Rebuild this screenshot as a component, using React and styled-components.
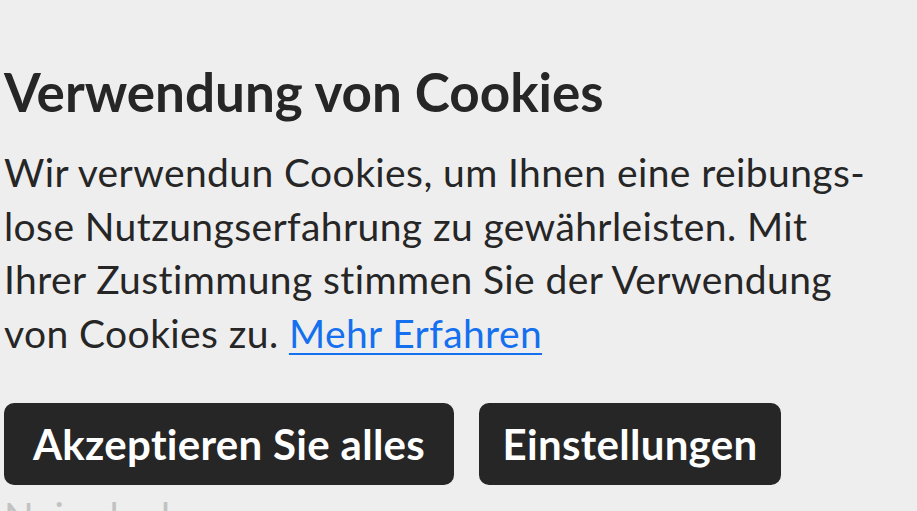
import React from 'react';
import styled, { createGlobalStyle } from 'styled-components';

const GlobalStyle = createGlobalStyle`
  html, body {
    margin: 0;
    padding: 0;
    background: #eeeeee;
    overflow: hidden;
  }
  body {
    font-family: Lato, "Noto Sans", sans-serif;
    color: #262626;
  }
`;

const Banner = styled.section`
  width: 917px;
  height: 511px;
  box-sizing: border-box;
  padding: 62px 0 0 4px;
  overflow: hidden;
`;

const Title = styled.h1`
  margin: 0 0 24px;
  font-size: 53px;
  line-height: 60px;
  font-weight: 700;
`;

const Text = styled.p`
  margin: 0;
  font-size: 39px;
  line-height: 53.7px;
  font-weight: 400;
  letter-spacing: 0.4px;
  white-space: nowrap;
`;

const MoreLink = styled.a`
  color: #1570ef;
  text-decoration: underline;
  text-decoration-thickness: 2px;
  text-underline-offset: 5px;
`;

const Actions = styled.div`
  display: flex;
  gap: 25px;
  margin-top: 42px;
`;

const Button = styled.button`
  width: ${(props) => props.$width}px;
  height: 82px;
  padding: 0;
  border: 0;
  border-radius: 10px;
  background: #262626;
  color: #ffffff;
  font-family: Lato, "Noto Sans", sans-serif;
  font-size: 42px;
  font-weight: 700;
  letter-spacing: 0.3px;
  cursor: pointer;
`;

const Decline = styled.div`
  margin-top: 5px;
  font-size: 39px;
  line-height: 53.7px;
  letter-spacing: 0.4px;
  color: #c2c2c2;
`;

export default function App() {
  return (
    <>
      <GlobalStyle />
      <Banner>
        <Title>Verwendung von Cookies</Title>
        <Text>
          Wir verwendun Cookies, um Ihnen eine reibungs-
          <br />
          lose Nutzungserfahrung zu gewährleisten. Mit
          <br />
          Ihrer Zustimmung stimmen Sie der Verwendung
          <br />
          von Cookies zu. <MoreLink href="#">Mehr Erfahren</MoreLink>
        </Text>
        <Actions>
          <Button type="button" $width={450}>Akzeptieren Sie alles</Button>
          <Button type="button" $width={302}>Einstellungen</Button>
        </Actions>
        <Decline>Nein danke</Decline>
      </Banner>
    </>
  );
}
